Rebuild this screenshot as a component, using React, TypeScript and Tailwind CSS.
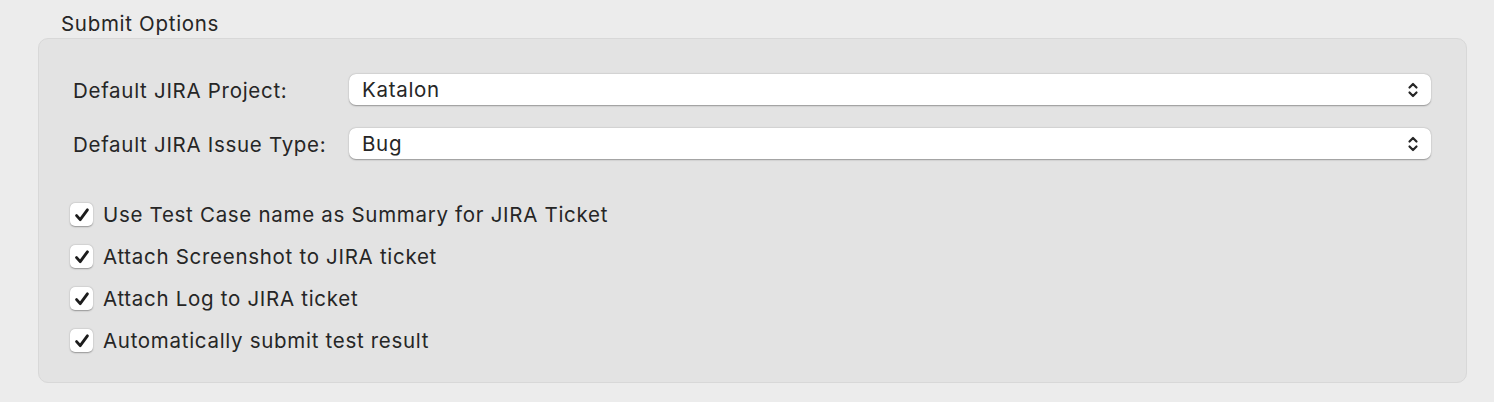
const OPTIONS = [
  'Use Test Case name as Summary for JIRA Ticket',
  'Attach Screenshot to JIRA ticket',
  'Attach Log to JIRA ticket',
  'Automatically submit test result',
];

function Chevrons() {
  return (
    <svg width="12" height="18" viewBox="0 0 12 18" fill="none" stroke="#262626" strokeWidth="2.2" strokeLinecap="round" strokeLinejoin="round">
      <path d="M2.5 6.5 L6 3 L9.5 6.5" />
      <path d="M2.5 11.5 L6 15 L9.5 11.5" />
    </svg>
  );
}

function CheckMark() {
  return (
    <svg width="16" height="16" viewBox="0 0 16 16" fill="none" stroke="#1c1c1c" strokeWidth="2.9" strokeLinecap="round" strokeLinejoin="round">
      <path d="M2.6 8.6 L6.2 12.6 L13.4 2.8" />
    </svg>
  );
}

function SelectRow({ label, value }: { label: string; value: string }) {
  return (
    <div className="flex flex-row items-center h-[31px]">
      <span className="w-[276px] shrink-0 pt-[3px]">{label}</span>
      <div className="flex-1 h-[31px] bg-white rounded-[7px] shadow-[0_0.5px_1.5px_rgba(0,0,0,0.35)] flex flex-row items-center justify-between pl-[13px] pr-[12px]">
        <span className="pt-[1px]">{value}</span>
        <Chevrons />
      </div>
    </div>
  );
}

export default function App() {
  return (
    <div className="w-[1494px] h-[402px] bg-[#ececec] text-[#262626] font-['Inter',sans-serif] text-[20.5px] tracking-[0.7px] leading-[26px] pt-[11px] pl-[38px] pr-[27px]">
      <h2 className="pl-[23px] h-[27px]">Submit Options</h2>
      <div className="h-[345px] bg-[#e3e3e3] border border-[#d8d8d8] rounded-[10px] pt-[35px] pl-[34px] pr-[35px]">
        <div className="flex flex-col gap-[23px]">
          <SelectRow label="Default JIRA Project:" value="Katalon" />
          <SelectRow label="Default JIRA Issue Type:" value="Bug" />
        </div>
        <ul className="flex flex-col gap-[19px] mt-[44px] -ml-[3px]">
          {OPTIONS.map((opt) => (
            <li key={opt} className="flex flex-row items-center gap-[10px] h-[23px]">
              <span className="w-[23px] h-[23px] bg-white rounded-[5px] shadow-[0_0.5px_1.5px_rgba(0,0,0,0.35)] flex items-center justify-center">
                <CheckMark />
              </span>
              <span className="pt-[1px]">{opt}</span>
            </li>
          ))}
        </ul>
      </div>
    </div>
  );
}
